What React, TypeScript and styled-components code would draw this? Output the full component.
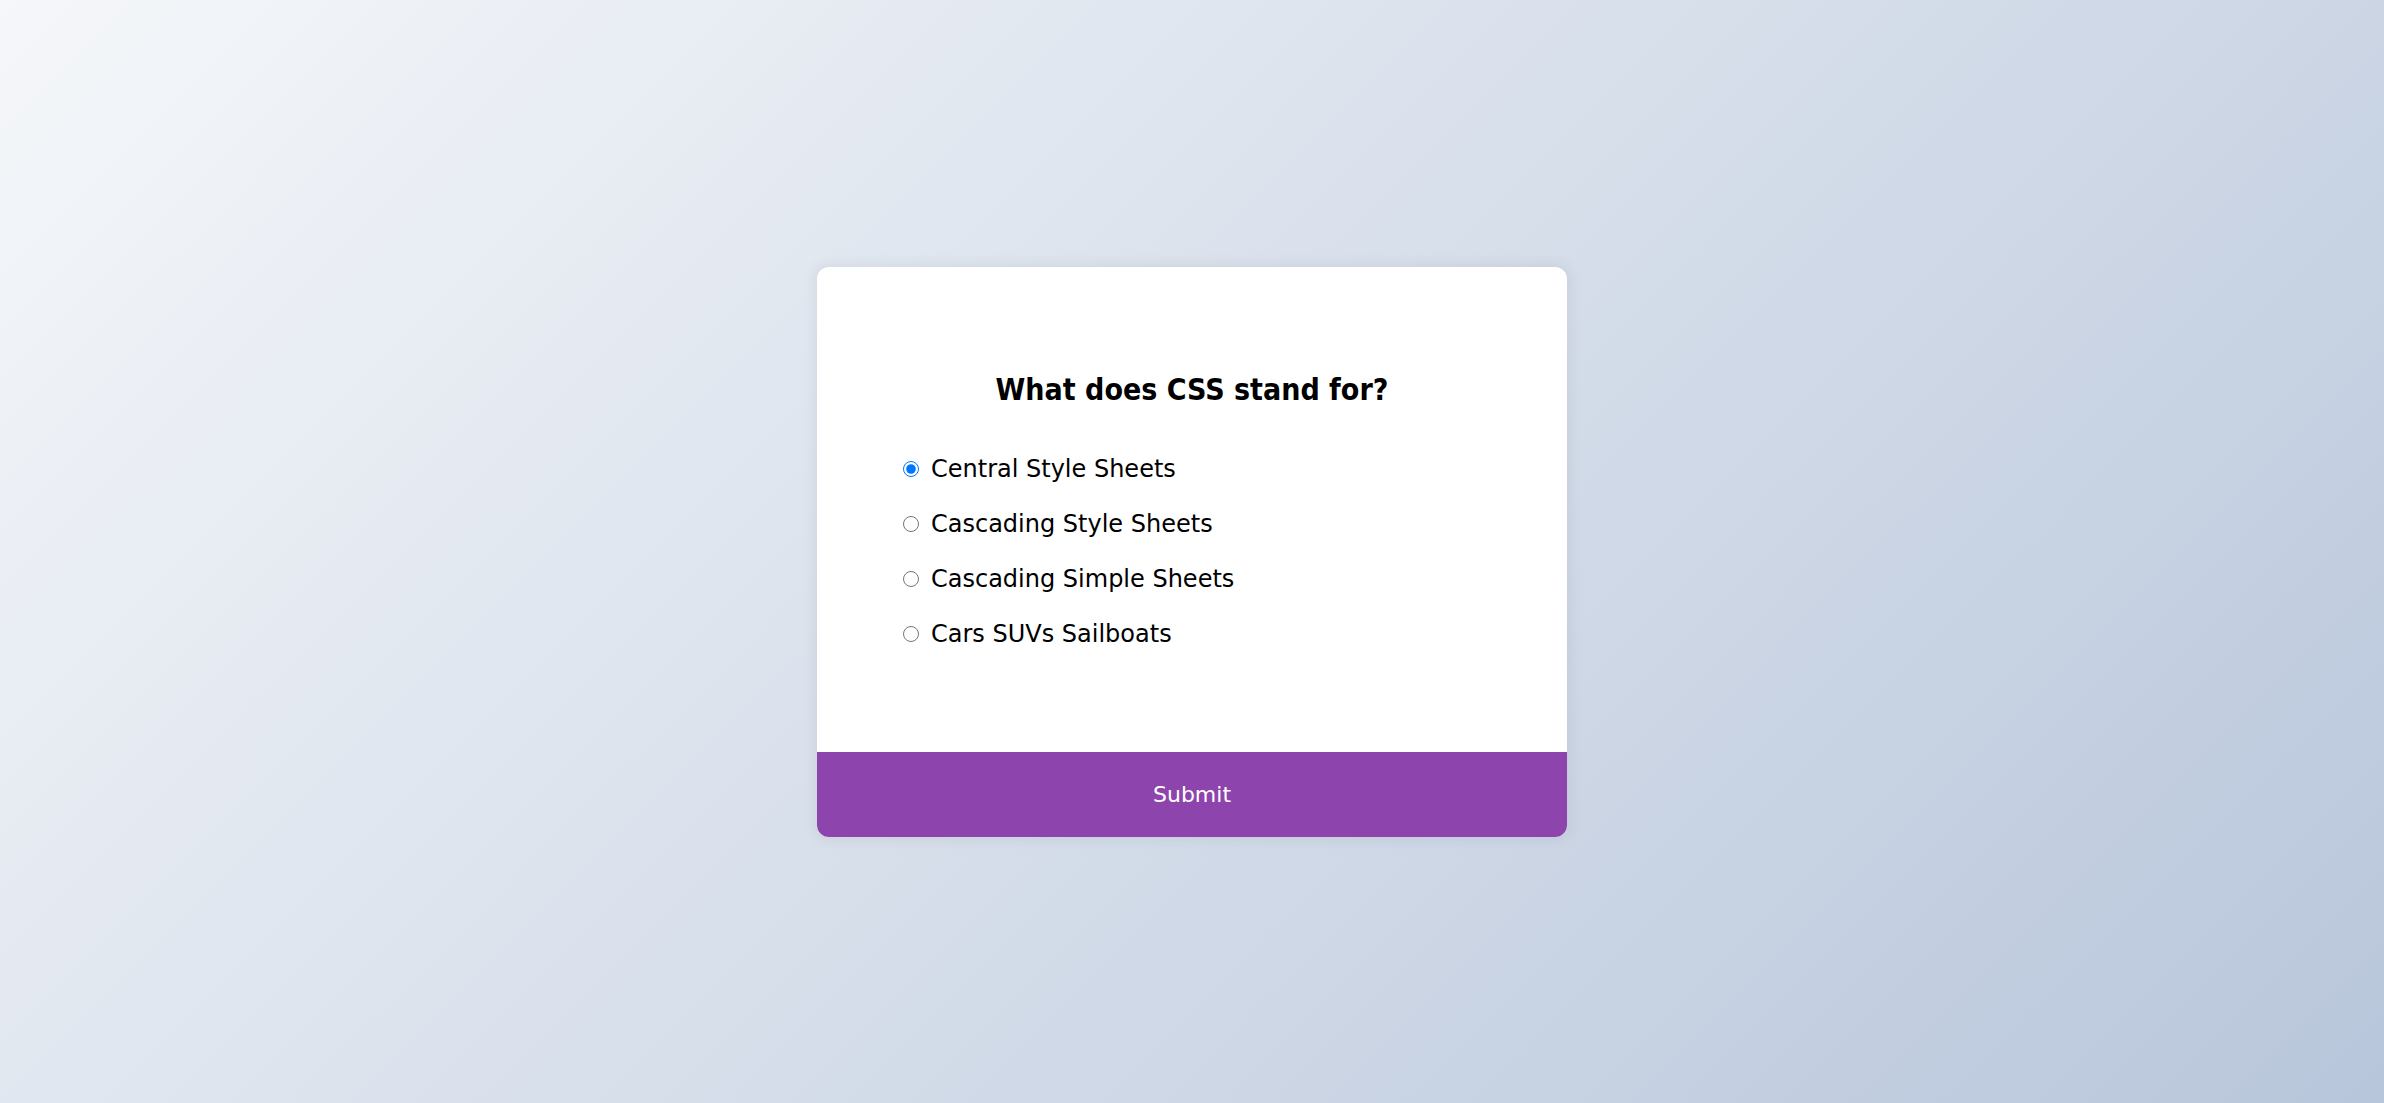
import React, { useState } from "react";
import styled, { createGlobalStyle } from "styled-components";

const GlobalStyle = createGlobalStyle`
  * { box-sizing: border-box; }
  html, body { margin: 0; padding: 0; }
  body {
    font-family: "DejaVu Sans", "Noto Sans", sans-serif;
    background: linear-gradient(315deg, #b8c6db 0%, #f5f7fa 100%);
    min-height: 100vh;
  }
`;

const Page = styled.main`
  height: 1103px;
  display: flex;
  align-items: center;
  justify-content: center;
`;

const Card = styled.div`
  width: 750px;
  background: #ffffff;
  border-radius: 12px;
  overflow: hidden;
  box-shadow: 0 0 12px 3px rgba(100, 100, 100, 0.1);
`;

const Header = styled.div`
  padding: 80px;
`;

const Question = styled.h2`
  margin: 0;
  padding: 20px;
  text-align: center;
  font-family: "DejaVu Sans Condensed", "DejaVu Sans", sans-serif;
  font-size: 30px;
  line-height: 45px;
  font-weight: 700;
  color: #000;
`;

const Options = styled.ul`
  list-style: none;
  margin: 20px 0;
  padding: 0;
  display: flex;
  flex-direction: column;
  gap: 20px;
`;

const Option = styled.li`
  display: flex;
  align-items: center;
  height: 35px;
  font-size: 24px;
`;

const Radio = styled.input`
  width: 16px;
  height: 16px;
  margin: 0 12px 0 6px;
  cursor: pointer;
`;

const Label = styled.label`
  cursor: pointer;
  color: #000;
`;

const SubmitButton = styled.button`
  display: block;
  width: 100%;
  border: none;
  background: #8e44ad;
  color: #fff;
  font-family: inherit;
  font-size: 22px;
  line-height: 33px;
  padding: 26px;
  cursor: pointer;
`;

const answers = [
  { id: "a", text: "Central Style Sheets" },
  { id: "b", text: "Cascading Style Sheets" },
  { id: "c", text: "Cascading Simple Sheets" },
  { id: "d", text: "Cars SUVs Sailboats" },
];

export default function App() {
  const [selected, setSelected] = useState("a");
  return (
    <>
      <GlobalStyle />
      <Page>
        <Card>
          <Header>
            <Question>What does CSS stand for?</Question>
            <Options>
              {answers.map((a) => (
                <Option key={a.id}>
                  <Radio
                    type="radio"
                    name="answer"
                    id={a.id}
                    checked={selected === a.id}
                    onChange={() => setSelected(a.id)}
                  />
                  <Label htmlFor={a.id}>{a.text}</Label>
                </Option>
              ))}
            </Options>
          </Header>
          <SubmitButton>Submit</SubmitButton>
        </Card>
      </Page>
    </>
  );
}
